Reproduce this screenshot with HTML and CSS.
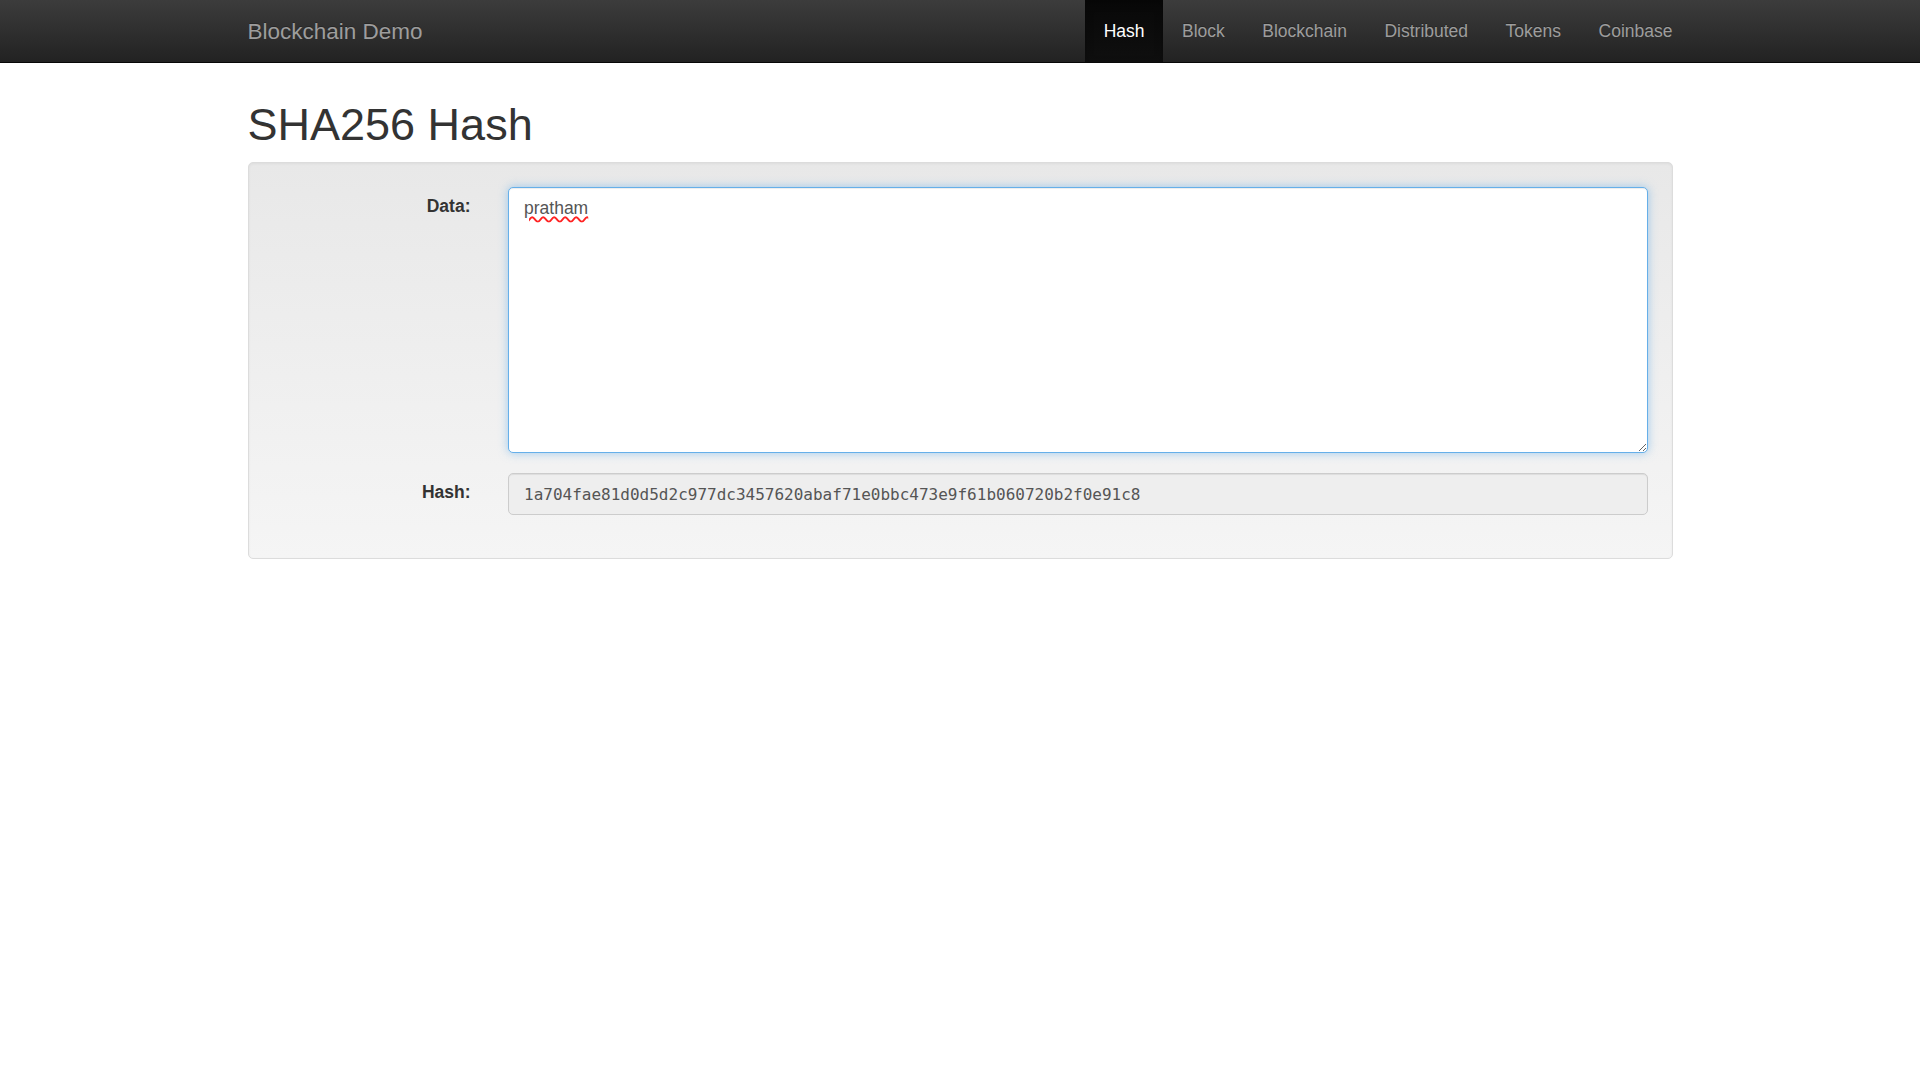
FILE: index.html
```html
<!DOCTYPE html>
<html lang="en">
<head>
<meta charset="utf-8">
<title>Blockchain Demo</title>
<link rel="stylesheet" href="styles.css">
</head>
<body>
<header class="navbar">
  <div class="container navbar-inner">
    <a class="brand" href="#">Blockchain Demo</a>
    <ul class="nav">
      <li><a class="nav-link active" href="#">Hash</a></li>
      <li><a class="nav-link" href="#">Block</a></li>
      <li><a class="nav-link" href="#">Blockchain</a></li>
      <li><a class="nav-link" href="#">Distributed</a></li>
      <li><a class="nav-link" href="#">Tokens</a></li>
      <li><a class="nav-link" href="#">Coinbase</a></li>
    </ul>
  </div>
</header>
<main class="container">
  <h1 class="page-title">SHA256 Hash</h1>
  <div class="well">
    <form class="form">
      <div class="form-group">
        <label class="control-label" for="data">Data:</label>
        <div class="field">
          <textarea id="data" class="form-control textarea" spellcheck="false">pratham</textarea>
          <span class="spell-mark" aria-hidden="true">pratham</span>
        </div>
      </div>
      <div class="form-group">
        <label class="control-label" for="hash">Hash:</label>
        <div class="field">
          <input id="hash" class="form-control hash-input" type="text" readonly value="1a704fae81d0d5d2c977dc3457620abaf71e0bbc473e9f61b060720b2f0e91c8">
        </div>
      </div>
    </form>
  </div>
</main>
</body>
</html>
```
FILE: styles.css
```css
* { box-sizing: border-box; }

html, body {
  margin: 0;
  padding: 0;
  background: #fff;
}

body {
  font-family: "Liberation Sans", Arial, Helvetica, sans-serif;
  font-size: 17.5px;
  line-height: 25px;
  color: #333;
}

.container {
  width: 1425px;
  margin: 0 auto;
}

/* Navbar */
.navbar {
  height: 63px;
  background-color: #222;
  background-image: linear-gradient(to bottom, #3c3c3c 0, #222 100%);
  border-bottom: 1px solid #080808;
}

.navbar-inner {
  display: flex;
  justify-content: space-between;
  align-items: stretch;
  height: 62px;
}

.brand {
  margin-left: -18.75px;
  padding: 18.75px 18.75px;
  font-size: 22.5px;
  line-height: 25px;
  color: #9d9d9d;
  text-decoration: none;
  text-shadow: 0 -1px 0 rgba(0, 0, 0, .25);
}

.nav {
  display: flex;
  list-style: none;
  margin: 0 -18.75px 0 0;
  padding: 0;
}

.nav-link {
  display: block;
  height: 62px;
  padding: 18.75px 18.75px;
  line-height: 25px;
  font-size: 17.5px;
  color: #9d9d9d;
  text-decoration: none;
  text-shadow: 0 -1px 0 rgba(0, 0, 0, .25);
}

.nav-link.active {
  color: #fff;
  background-color: #080808;
  background-image: linear-gradient(to bottom, #080808 0, #0f0f0f 100%);
  box-shadow: inset 0 3px 9px rgba(0, 0, 0, .25);
}

/* Title */
.page-title {
  margin: 37px 0 12.5px;
  font-size: 45px;
  font-weight: 500;
  line-height: 49.5px;
  color: #333;
}

/* Well */
.well {
  padding: 24px;
  min-height: 25px;
  background-color: #f5f5f5;
  background-image: linear-gradient(to bottom, #e8e8e8 0, #f5f5f5 100%);
  border: 1px solid #dcdcdc;
  border-radius: 5px;
  box-shadow: inset 0 1px 3px rgba(0, 0, 0, .05), 0 1px 0 rgba(255, 255, 255, .1);
}

.form {
  display: flex;
  flex-direction: column;
  gap: 20px;
  margin-bottom: 18.75px;
}

.form-group {
  display: grid;
  grid-template-columns: 198px 1fr;
  column-gap: 37.5px;
}

.control-label {
  padding-top: 6.5px;
  text-align: right;
  font-weight: 700;
  font-size: 17.5px;
  line-height: 25px;
}

.field {
  position: relative;
}

.form-control {
  display: block;
  width: 100%;
  padding: 7.5px 15px;
  font-family: "Liberation Sans", Arial, Helvetica, sans-serif;
  font-size: 17.5px;
  line-height: 25px;
  color: #555;
  background-color: #fff;
  border: 1px solid #ccc;
  border-radius: 5px;
  box-shadow: inset 0 1px 1px rgba(0, 0, 0, .075);
  margin: 0;
}

.textarea {
  height: 266px;
  resize: vertical;
  border-color: #66afe9;
  outline: 0;
  box-shadow: inset 0 1px 1px rgba(0, 0, 0, .075), 0 0 10px rgba(102, 175, 233, .6);
}

.spell-mark {
  position: absolute;
  top: 8.5px;
  left: 16px;
  font-size: 17.5px;
  line-height: 25px;
  color: transparent;
  text-decoration: underline wavy #f22;
  text-decoration-thickness: 1.5px;
  text-underline-offset: 2px;
  pointer-events: none;
}

.hash-input {
  height: 42px;
  font-family: "DejaVu Sans Mono", "Liberation Mono", monospace;
  font-size: 16px;
  background-color: #eee;
  color: #555;
}
```
